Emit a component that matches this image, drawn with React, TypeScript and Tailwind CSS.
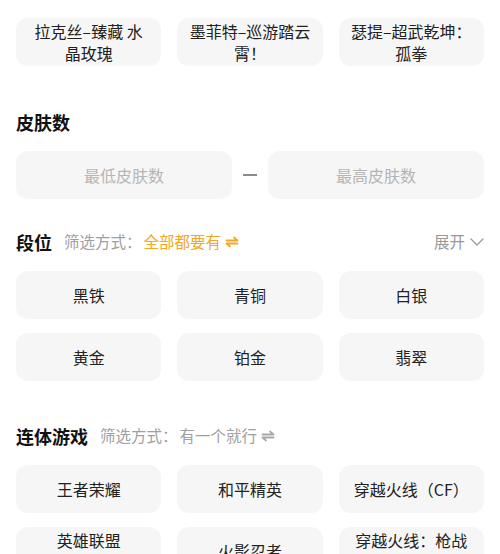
const topSkins = ["拉克丝–臻藏 水晶玫瑰", "墨菲特–巡游踏云霄！", "瑟提–超武乾坤：孤拳"];
const ranks = ["黑铁", "青铜", "白银", "黄金", "铂金", "翡翠"];
const games = ["王者荣耀", "和平精英", "穿越火线（CF）", "英雄联盟\n手游", "火影忍者", "穿越火线：枪战王者"];

function SwapIcon({ className }: { className?: string }) {
  return (
    <svg viewBox="0 0 14 12" className={className} fill="none" stroke="currentColor" strokeWidth="1.8" strokeLinecap="round" strokeLinejoin="round">
      <path d="M1.5 4.5h11l-3.5-3" />
      <path d="M12.5 7.5h-11l3.5 3" />
    </svg>
  );
}

function Tag({ label }: { label: string }) {
  return (
    <div className="min-h-[48px] rounded-xl bg-[#f6f6f6] px-[12px] py-[2px] flex items-center justify-center text-center text-[16px] leading-[22px] text-[#222] whitespace-pre-line">
      {label}
    </div>
  );
}

function SectionHeader({ title, children }: { title: string; children?: React.ReactNode }) {
  return (
    <div className="flex items-center h-[26px] mb-4">
      <h2 className="text-[18px] font-bold text-[#111] leading-[26px]">{title}</h2>
      {children}
    </div>
  );
}

export default function App() {
  return (
    <div
      className="w-[500px] h-[554px] overflow-hidden bg-white px-4 pt-[18px]"
      style={{ fontFamily: '"Noto Sans CJK SC", "Noto Sans", sans-serif' }}
    >
      {/* skins */}
      <div className="grid grid-cols-3 gap-x-4">
        {topSkins.map((s) => (
          <Tag key={s} label={s} />
        ))}
      </div>

      {/* skin count */}
      <div className="mt-[43px]">
        <SectionHeader title="皮肤数" />
        <div className="flex items-center">
          <div className="h-[48px] flex-1 rounded-xl bg-[#f6f6f6] flex items-center justify-center text-[16px] text-[#b5b5b5]">
            最低皮肤数
          </div>
          <div className="w-[36px] flex justify-center">
            <div className="w-[14px] h-[1.5px] bg-[#8a8a8a]" />
          </div>
          <div className="h-[48px] flex-1 rounded-xl bg-[#f6f6f6] flex items-center justify-center text-[16px] text-[#b5b5b5]">
            最高皮肤数
          </div>
        </div>
      </div>

      {/* rank */}
      <div className="mt-[30px]">
        <SectionHeader title="段位">
          <span className="ml-3 text-[15.5px] text-[#a0a0a0]">筛选方式：</span>
          <span className="ml-[2px] text-[15.5px] text-[#f5a623]">全部都要有</span>
          <SwapIcon className="ml-1 w-[14px] h-[12px] text-[#f5a623]" />
          <div className="ml-auto flex items-center text-[15.5px] text-[#999]">
            展开
            <svg viewBox="0 0 14 8" className="ml-[5px] w-[14px] h-[8px]" fill="none" stroke="currentColor" strokeWidth="1.3" strokeLinecap="round" strokeLinejoin="round">
              <path d="M1 1l6 6 6-6" />
            </svg>
          </div>
        </SectionHeader>
        <div className="grid grid-cols-3 gap-x-4 gap-y-[14px]">
          {ranks.map((r) => (
            <Tag key={r} label={r} />
          ))}
        </div>
      </div>

      {/* games */}
      <div className="mt-[42px]">
        <SectionHeader title="连体游戏">
          <span className="ml-3 text-[15.5px] text-[#a0a0a0]">筛选方式：</span>
          <span className="ml-[2px] text-[15.5px] text-[#a0a0a0]">有一个就行</span>
          <SwapIcon className="ml-1 w-[14px] h-[12px] text-[#a8a8a8]" />
        </SectionHeader>
        <div className="grid grid-cols-3 gap-x-4 gap-y-[14px]">
          {games.map((g) => (
            <Tag key={g} label={g} />
          ))}
        </div>
      </div>
    </div>
  );
}
